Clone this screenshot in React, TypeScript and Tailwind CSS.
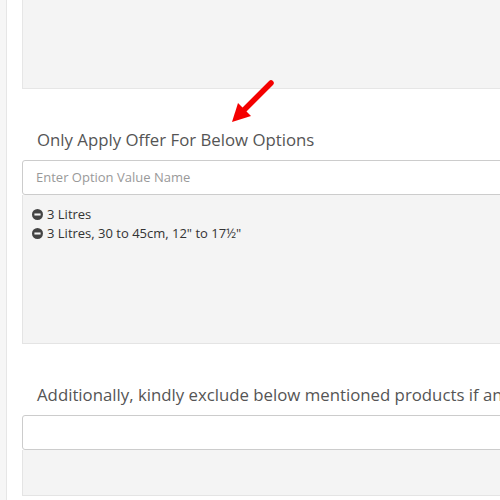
import React from 'react';

const MinusIcon = () => (
  <svg viewBox="0 0 16 16" className="w-[11px] h-[11px] shrink-0">
    <circle cx="8" cy="8" r="8" fill="#444" />
    <rect x="3.5" y="6.5" width="9" height="3" fill="#f4f4f4" />
  </svg>
);

const Arrow = () => (
  <svg className="absolute left-[226px] top-[76px] w-[52px] h-[52px]" viewBox="0 0 52 52">
    <line x1="45" y1="7" x2="18" y2="34" stroke="#f40000" strokeWidth="5.5" strokeLinecap="round" />
    <polygon points="6,46 12,27 25,40" fill="#f40000" />
  </svg>
);

const options = ['3 Litres', '3 Litres, 30 to 45cm, 12" to 17½"'];

export default function App() {
  return (
    <div className="relative w-[500px] h-[500px] overflow-hidden bg-white flex font-['Open_Sans',sans-serif]">
      <div className="w-[7px] shrink-0 bg-[#f6f6f6] border-r border-[#e6e6e6]" />
      <div className="flex-1 pl-[15px] flex flex-col">
        <div className="h-[89px] shrink-0 bg-[#f4f4f4] border-b border-l border-[#e6e6e6]" />

        <h3 className="mt-[39px] pl-[15px] text-[16.8px] leading-[24px] text-[#555] whitespace-nowrap">
          Only Apply Offer For Below Options
        </h3>
        <div className="mt-[8px] h-[35px] w-[500px] shrink-0 bg-white border border-[#ccc] rounded-[3px] flex items-center px-[13px]">
          <span className="text-[13px] text-[#999]">Enter Option Value Name</span>
        </div>
        <div className="h-[149px] w-[500px] shrink-0 bg-[#f4f4f4] border border-t-0 border-[#e4e4e4] pt-[10px] px-[9px]">
          {options.map(o => (
            <div key={o} className="flex items-center gap-[4px] h-[19px] text-[13px] text-[#333] whitespace-nowrap">
              <MinusIcon />
              <span>{o}</span>
            </div>
          ))}
        </div>

        <h3 className="mt-[39px] pl-[15px] text-[16.8px] leading-[24px] text-[#555] whitespace-nowrap">
          Additionally, kindly exclude below mentioned products if any
        </h3>
        <div className="mt-[8px] h-[35px] w-[500px] shrink-0 bg-white border border-[#ccc] rounded-[3px]" />
        <div className="h-[46px] w-[500px] shrink-0 bg-[#f4f4f4] border border-t-0 border-[#e4e4e4]" />
      </div>
      <Arrow />
    </div>
  );
}
